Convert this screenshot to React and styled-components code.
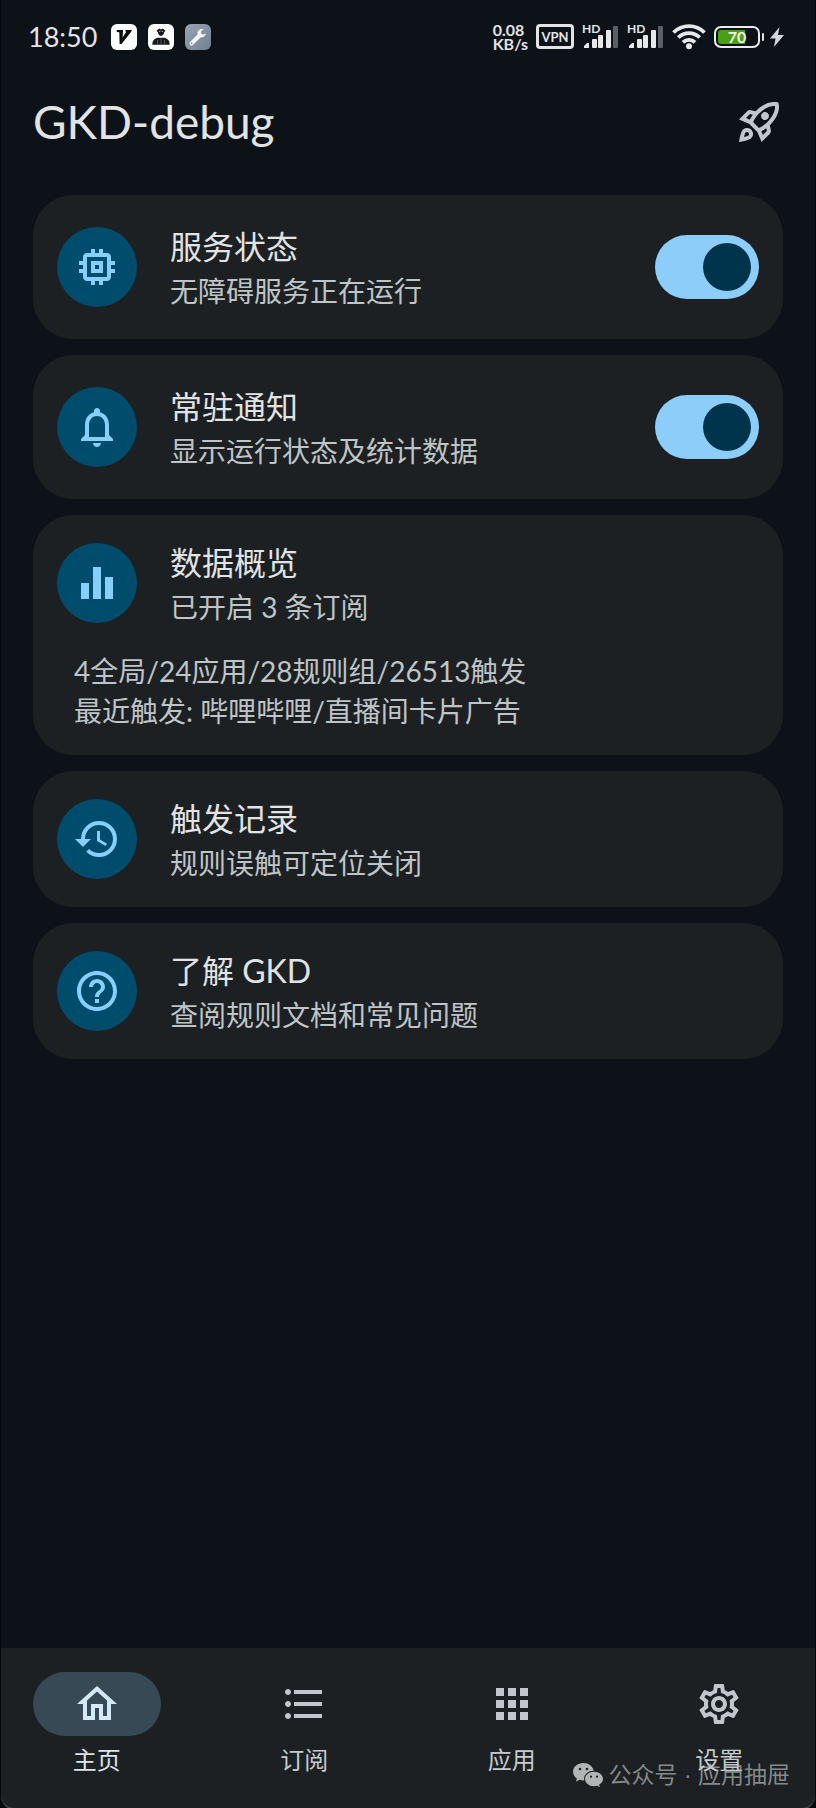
import React, { useState } from "react";
import styled, { createGlobalStyle } from "styled-components";
import {
  MdOutlineMemory,
  MdNotificationsNone,
  MdEqualizer,
  MdHistory,
  MdHelpOutline,
  MdOutlineHome,
  MdFormatListBulleted,
  MdApps,
  MdOutlineSettings,
  MdOutlineRocketLaunch,
} from "react-icons/md";

const GlobalStyle = createGlobalStyle`
  * { box-sizing: border-box; }
  body {
    margin: 0;
    background: #05070b;
    font-family: Lato, "Noto Sans CJK SC", sans-serif;
    color: #e1e3e5;
  }
  h1, h2, p { margin: 0; font-weight: 400; }
  button { font: inherit; color: inherit; }
`;

const Screen = styled.div`
  display: flex;
  flex-direction: column;
  min-height: 100vh;
  margin: 0 1px;
  border-radius: 0 0 14px 14px;
  background: #0d1118;
`;

const StatusBar = styled.div`
  display: flex;
  align-items: center;
  justify-content: space-between;
  height: 73px;
  padding: 0 31px 0 27px;
`;

const StatusGroup = styled.div`
  display: flex;
  align-items: center;
  gap: ${(p) => p.$gap}px;
`;

const Clock = styled.time`
  margin-right: 3px;
  font-size: 27px;
  line-height: 32px;
`;

const NetSpeed = styled.div`
  font-size: 16px;
  font-weight: 700;
  line-height: 14px;
`;

const VpnBadge = styled.span`
  display: flex;
  align-items: center;
  justify-content: center;
  width: 38px;
  height: 25px;
  border: 3px solid #e1e3e5;
  border-radius: 4px;
  font-size: 13px;
  font-weight: 700;
  line-height: 16px;
`;

const Signal = styled.div`
  position: relative;
  width: 37px;
  height: 25px;
  svg { display: block; }
`;

const SignalTag = styled.span`
  position: absolute;
  top: 0;
  left: 0;
  font-size: 12px;
  font-weight: 700;
  line-height: 10px;
`;

const BatteryGroup = styled.div`
  display: flex;
  align-items: center;
`;

const BatteryShell = styled.div`
  display: flex;
  align-items: center;
  justify-content: center;
  width: 46px;
  height: 22px;
  padding: 0;
  border: 2px solid #e8eaec;
  border-radius: 7px;
  background: linear-gradient(90deg, #4c9f14 68%, transparent 68%) content-box;
  box-shadow: inset 0 0 0 2px #0d1118;
  font-size: 16px;
  font-weight: 700;
  line-height: 18px;
  color: #f1f5ec;
`;

const BatteryNub = styled.div`
  width: 2px;
  height: 8px;
  margin: 0 6px 0 2px;
  border-radius: 1px;
  background: #e1e3e5;
`;

const TopBar = styled.header`
  display: flex;
  align-items: center;
  justify-content: space-between;
  height: 98px;
  padding: 0 32px;
`;

const PageTitle = styled.h1`
  font-size: 46px;
  line-height: 56px;
`;

const IconButton = styled.button`
  display: flex;
  padding: 0;
  border: 0;
  background: none;
  color: #c1c7cc;
  cursor: pointer;
`;

const CardList = styled.main`
  display: flex;
  flex: 1;
  flex-direction: column;
  gap: 16px;
  padding: 24px 32px;
`;

const Card = styled.section`
  display: flex;
  flex-direction: column;
  gap: 24px;
  width: 100%;
  padding: ${(p) => (p.$roomy ? 28 : 24)}px 24px;
  border: 0;
  border-radius: 40px;
  background: #1c2022;
  text-align: left;
`;

const CardRow = styled.div`
  display: flex;
  align-items: center;
  gap: 33px;
`;

const IconDisc = styled.span`
  display: flex;
  flex: none;
  align-items: center;
  justify-content: center;
  width: 80px;
  height: 80px;
  border-radius: 50%;
  background: #004c6c;
  color: #85cff9;
`;

const CardText = styled.label`
  flex: 1;
`;

const CardTitle = styled.span`
  display: block;
  font-size: 32px;
  line-height: 48px;
`;

const CardNote = styled.span`
  display: block;
  font-size: 28px;
  line-height: 40px;
  color: #bfc4c8;
`;

const Stats = styled.div`
  padding: 0 17px;
`;

const Switch = styled.input`
  display: flex;
  flex: none;
  align-items: center;
  appearance: none;
  width: 104px;
  height: 64px;
  margin: 0;
  padding: 0 8px;
  border-radius: 32px;
  background: #41484d;
  cursor: pointer;

  &::before {
    content: "";
    width: 48px;
    height: 48px;
    border-radius: 50%;
    background: #8b9297;
  }
  &:checked { justify-content: flex-end; background: #8ccdf9; }
  &:checked::before { background: #00344d; }
`;

const NavBar = styled.nav`
  display: flex;
  gap: 16px;
  padding: 24px 0 32px;
  border-radius: 0 0 14px 14px;
  background: #1c2022;
  box-shadow: 0 2px 0 #3c4144;
`;

const NavItem = styled.a`
  display: flex;
  flex: 1;
  flex-direction: column;
  align-items: center;
  gap: 8px;
  color: #c5cacf;
  font-size: 24px;
  line-height: 32px;
  text-decoration: none;
  &[aria-current] { color: #dde3e8; }
`;

const NavPill = styled.span`
  display: flex;
  align-items: center;
  justify-content: center;
  width: 128px;
  height: 64px;
  border-radius: 32px;
  background: ${(p) => (p.$active ? "#384956" : "transparent")};
  color: ${(p) => (p.$active ? "#d3e8f8" : "#c1c7cc")};
`;

const Watermark = styled.div`
  position: absolute;
  right: 26px;
  bottom: 17px;
  display: flex;
  align-items: center;
  gap: 6px;
  font-family: "Liberation Sans", "Noto Sans CJK SC", sans-serif;
  font-size: 23px;
  line-height: 32px;
  color: rgba(190, 194, 194, 0.66);
  pointer-events: none;
`;

const Frame = styled.div`
  position: relative;
`;

function AppV() {
  return (
    <svg width="26" height="26" viewBox="0 0 26 26" aria-hidden="true">
      <rect width="26" height="26" rx="6" fill="#fbfdfd" />
      <path d="M5.500 6h6.500l-.4 7.500L15 8.300 14.300 6H21l-1 2L10.500 20H8.600L8.300 8.300 6 8z" fill="#0a0c0e" />
    </svg>
  );
}

function AppAgent() {
  return (
    <svg width="26" height="26" viewBox="0 0 26 26" aria-hidden="true">
      <rect width="26" height="26" rx="6" fill="#fbfdfd" />
      <path d="M8.500 6.800l2.700-2.200 1.800 1 1.800-1 2.700 2.200-1.400 1.500c0 1.700-1.200 3.200-3.100 3.700-1.900-.5-3.100-2-3.100-3.700z" fill="#17191c" />
      <path d="M11 7.500h1.300M13.700 7.500H15" stroke="#c9cccd" strokeWidth=".8" />
      <path d="M4.300 20.800c0-3.800 1.500-6.200 5-7.100h7.400c3.500.9 5 3.300 5 7.100z" fill="#17191c" />
      <path d="M9.500 16v4.800M16.500 16v4.800M13 14v6.800" stroke="#6c7073" strokeWidth=".7" />
    </svg>
  );
}

function AppTool() {
  return (
    <svg width="26" height="26" viewBox="0 0 26 26" aria-hidden="true">
      <defs>
        <linearGradient id="tool" x1="0" y1="0" x2="1" y2="1">
          <stop offset="0" stopColor="#98a4b3" />
          <stop offset="1" stopColor="#71808f" />
        </linearGradient>
      </defs>
      <rect width="26" height="26" rx="6" fill="url(#tool)" />
      <path d="M6.500 19.500l8-8" stroke="#f4f7fa" strokeWidth="4" strokeLinecap="round" />
      <path d="M18.800 5.600a4.200 4.200 0 1 0 2 3.900l-2.800 1.300-2-1.500.2-2.400z" fill="#f4f7fa" />
      <circle cx="6.700" cy="19.300" r=".9" fill="#7c8997" />
    </svg>
  );
}

function SignalBars() {
  return (
    <Signal>
      <SignalTag>HD</SignalTag>
      <svg width="37" height="25" viewBox="0 0 37 25" aria-hidden="true">
        <g fill="#e6e8ea">
          <path d="M2 24v-2l3-3h2v5z" />
          <rect x="10" y="15" width="5" height="9" rx="1" />
          <rect x="16" y="11" width="5" height="13" rx="1" />
          <rect x="24" y="6" width="5" height="18" rx="1" />
        </g>
        <rect x="31" y="2" width="5" height="22" rx="1" fill="#5b5f64" />
      </svg>
    </Signal>
  );
}

function Wifi() {
  return (
    <svg width="34" height="26" viewBox="0 0 34 26" aria-hidden="true">
      <g fill="none" stroke="#e6e8ea" strokeWidth="3.800">
        <path d="M1.500 8.500a22 22 0 0 1 31 0" />
        <path d="M6.300 13.500a15.200 15.200 0 0 1 21.400 0" />
        <path d="M11 18.300a8.600 8.600 0 0 1 12 0" />
      </g>
      <circle cx="17" cy="22.300" r="3" fill="#e6e8ea" />
    </svg>
  );
}

function Bolt() {
  return (
    <svg width="14" height="20" viewBox="0 0 14 20" aria-hidden="true">
      <path d="M9.500 0L0 11.500h5.500L4 20l10-12H8z" fill="#d3d5d8" />
    </svg>
  );
}

function WeChat() {
  return (
    <svg width="30" height="24" viewBox="0 0 30 24" aria-hidden="true">
      <path
        fill="#b0b5b5"
        fillRule="evenodd"
        d="M10.500 0C4.700 0 0 3.900 0 8.800c0 2.800 1.500 5.200 3.900 6.800L3 18.700l3.500-1.900c1.600.5 3.100.7 4.800.6C10 12 15 7.600 20.800 7.700 19.800 3.300 15.600 0 10.500 0zM7 4.700a1.300 1.300 0 1 1 0 2.600 1.300 1.300 0 0 1 0-2.600zm7 0a1.300 1.300 0 1 1 0 2.600 1.300 1.300 0 0 1 0-2.600z"
      />
      <path
        fill="#b0b5b5"
        fillRule="evenodd"
        d="M21 8.800c-5 0-9 3.200-9 7.200s4 7.200 9 7.200c1.100 0 2.100-.2 3.100-.4l2.700 1.200-.7-2.400c2.400-1.300 3.900-3.300 3.900-5.600 0-4-4-7.200-9-7.200zM18 12.600a1.100 1.100 0 1 1 0 2.200 1.100 1.100 0 0 1 0-2.200zm6 0a1.100 1.100 0 1 1 0 2.200 1.100 1.100 0 0 1 0-2.200z"
      />
    </svg>
  );
}

function CardHead({ icon: Icon, title, note, htmlFor, children }) {
  return (
    <CardRow>
      <IconDisc><Icon size={48} /></IconDisc>
      <CardText as={htmlFor ? "label" : "span"} htmlFor={htmlFor}>
        <CardTitle>{title}</CardTitle>
        <CardNote>{note}</CardNote>
      </CardText>
      {children}
    </CardRow>
  );
}

function SwitchCard({ id, ...head }) {
  const [on, setOn] = useState(true);
  return (
    <Card $roomy>
      <CardHead htmlFor={id} {...head}>
        <Switch id={id} type="checkbox" role="switch" checked={on} onChange={(e) => setOn(e.target.checked)} />
      </CardHead>
    </Card>
  );
}

const tabs = [
  { label: "主页", icon: MdOutlineHome, href: "#home" },
  { label: "订阅", icon: MdFormatListBulleted, href: "#subs" },
  { label: "应用", icon: MdApps, href: "#apps" },
  { label: "设置", icon: MdOutlineSettings, href: "#settings" },
];

export default function App() {
  return (
    <Frame>
      <GlobalStyle />
      <Screen>
        <StatusBar>
          <StatusGroup $gap={11}>
            <Clock>18:50</Clock>
            <AppV />
            <AppAgent />
            <AppTool />
          </StatusGroup>
          <StatusGroup $gap={8}>
            <NetSpeed>0.08<br />KB/s</NetSpeed>
            <VpnBadge>VPN</VpnBadge>
            <SignalBars />
            <SignalBars />
            <Wifi />
            <BatteryGroup>
              <BatteryShell>70</BatteryShell>
              <BatteryNub />
              <Bolt />
            </BatteryGroup>
          </StatusGroup>
        </StatusBar>
        <TopBar>
          <PageTitle>GKD-debug</PageTitle>
          <IconButton type="button" aria-label="启动"><MdOutlineRocketLaunch size={48} /></IconButton>
        </TopBar>
        <CardList>
          <SwitchCard id="service" icon={MdOutlineMemory} title="服务状态" note="无障碍服务正在运行" />
          <SwitchCard id="notice" icon={MdNotificationsNone} title="常驻通知" note="显示运行状态及统计数据" />
          <Card>
            <CardHead icon={MdEqualizer} title="数据概览" note="已开启 3 条订阅" />
            <Stats>
              <CardNote>4全局/24应用/28规则组/26513触发</CardNote>
              <CardNote>最近触发: 哔哩哔哩/直播间卡片广告</CardNote>
            </Stats>
          </Card>
          <Card as="button" type="button">
            <CardHead icon={MdHistory} title="触发记录" note="规则误触可定位关闭" />
          </Card>
          <Card as="button" type="button">
            <CardHead icon={MdHelpOutline} title="了解 GKD" note="查阅规则文档和常见问题" />
          </Card>
        </CardList>
        <NavBar>
          {tabs.map(({ label, icon: Icon, href }, i) => (
            <NavItem key={href} href={href} aria-current={i === 0 ? "page" : undefined}>
              <NavPill $active={i === 0}><Icon size={48} /></NavPill>
              {label}
            </NavItem>
          ))}
        </NavBar>
      </Screen>
      <Watermark>
        <WeChat />
        公众号 · 应用抽屉
      </Watermark>
    </Frame>
  );
}
